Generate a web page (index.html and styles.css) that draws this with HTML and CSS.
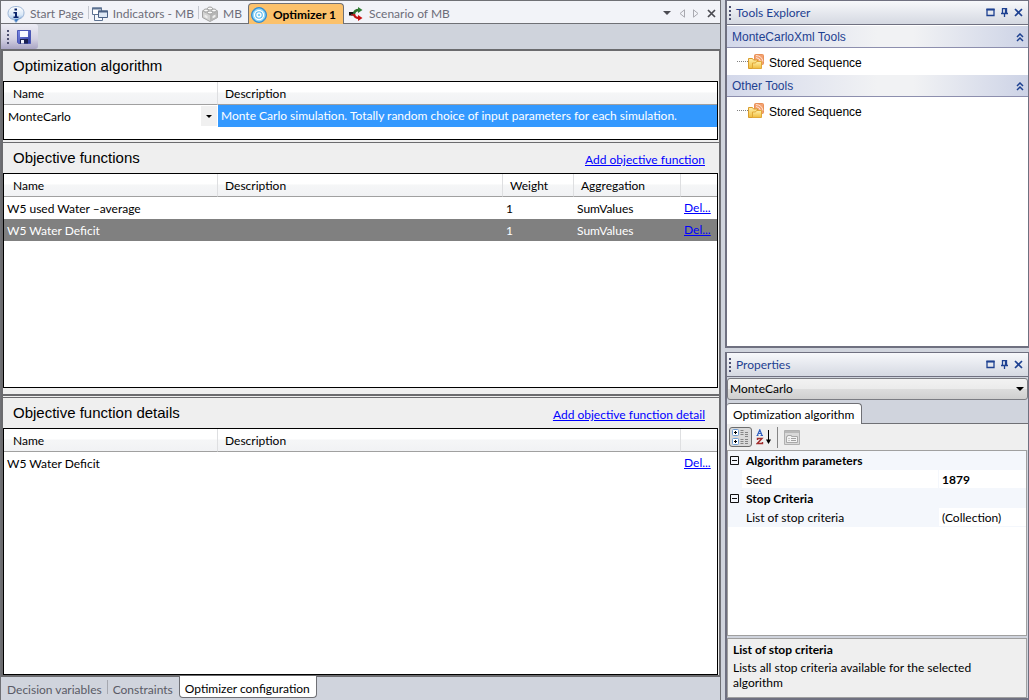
FILE: index.html
```html
<!DOCTYPE html>
<html lang="en">
<head>
<meta charset="utf-8">
<title>Optimizer 1</title>
<link rel="stylesheet" href="styles.css">
</head>
<body>
<svg class="defs" width="0" height="0" aria-hidden="true">
  <defs>
    <linearGradient id="g-info" x1="0" y1="0" x2="0" y2="1"><stop offset="0" stop-color="#ffffff"/><stop offset="0.5" stop-color="#dbe9f8"/><stop offset="1" stop-color="#7fa9da"/></linearGradient>
    <linearGradient id="g-disk" x1="0" y1="0" x2="1" y2="1"><stop offset="0" stop-color="#7f8ce8"/><stop offset="1" stop-color="#2a389c"/></linearGradient>
    <linearGradient id="g-fold" x1="0" y1="0" x2="0" y2="1"><stop offset="0" stop-color="#fff0a8"/><stop offset="1" stop-color="#f0bc3c"/></linearGradient>
    <symbol id="i-folder" viewBox="0 0 16 16">
      <rect x="6.5" y="0.5" width="9" height="10" rx="1" fill="#f3a070" stroke="#e89058"/>
      <path d="M8 3.500q4 .5 5 5M8 1.500q6 .5 7 6" fill="none" stroke="#fde3d0"/>
      <path d="M.5 4.500h4l1 1.500h4v8.500h-9z" fill="url(#g-fold)" stroke="#d99c2c"/>
      <path d="M4.500 9h3l1-1.500h5v7h-9z" fill="url(#g-fold)" stroke="#e0a838"/>
    </symbol>
    <symbol id="i-max" viewBox="0 0 9 9"><path d="M1 1.500h7v6H1z" fill="none" stroke="currentColor" stroke-width="1.300"/><path d="M.4 1.500h8.200" stroke="currentColor" stroke-width="1.800"/></symbol>
    <symbol id="i-pin" viewBox="0 0 9 9"><path d="M2.500 5V.5h4V5M1 5.500h7M4.500 6v3M5.500 1v4" fill="none" stroke="currentColor" stroke-width="1.300"/></symbol>
    <symbol id="i-close" viewBox="0 0 9 9"><path d="M1 1l7 7M8 1L1 8" stroke="currentColor" stroke-width="1.700"/></symbol>
    <symbol id="i-chev" viewBox="0 0 8 9"><path d="M1 4l3-3 3 3M1 8l3-3 3 3" fill="none" stroke="currentColor" stroke-width="1.500"/></symbol>
    <symbol id="i-down" viewBox="0 0 8 4"><path d="M0 0h8L4 4z" fill="currentColor"/></symbol>
    <symbol id="i-minus" viewBox="0 0 9 9"><path d="M.5.5h8v8h-8zM2 4.500h5" fill="none" stroke="#111"/></symbol>
  </defs>
</svg>
<div class="workspace">
  <main class="document">
    <nav class="doc-tabs" aria-label="Documents">
      <button class="doc-tab">
        <svg width="18" height="17" viewBox="0 0 18 17"><path d="M9 .5c5 0 8 2.500 8 6.500 0 3.200-2 5.300-5 6L9 16.500 6.500 13.500C3 13 1 10.500 1 7.500 1 3.500 4 .5 9 .5z" fill="url(#g-info)" stroke="#9db6d6"/><path d="M15.500 9.500c-1 2-2.500 3-4 3.500L9 16.200l-1.500-3c4 .3 6.500-1.200 8-3.700z" fill="#3c78c0"/><path d="M7.500 2.500H10v2H7.500zM6.500 6H10v4.500h1.500V12h-5v-1.500H8v-3H6.500z" fill="#0a246c"/></svg>
        <span>Start Page</span>
      </button>
      <button class="doc-tab">
        <svg width="16" height="15" viewBox="0 0 16 15"><path d="M.5 1h9v6.500h-9z" fill="#fff" stroke="#5d7292"/><path d="M0 1.500h10" stroke="#5d7292" stroke-width="2"/><path d="M2.500 7.500h8v6h-8z" fill="#f4f7fb" stroke="#5d7292"/><path d="M6.500 4h9v6.500h-9z" fill="#dfe8f4" stroke="#4c6285"/><path d="M6 4.500h10" stroke="#4c6285" stroke-width="2"/></svg>
        <span>Indicators - MB</span>
      </button>
      <button class="doc-tab">
        <svg width="16" height="16" viewBox="0 0 16 16"><path d="M.5 5L8 2l7.500 3v6.500L8 15.500.5 11.500z" fill="#d2d2d2" stroke="#a2a2a2"/><path d="M.5 5L8 8.500 15.500 5 8 2z" fill="#efefef" stroke="#b5b5b5"/><path d="M8 8.500v7l7.500-4V5z" fill="#b5b5b5"/><g fill="#fafafa" stroke="#a0a0a0"><ellipse cx="8" cy="2.500" rx="2.500" ry="1.500"/><ellipse cx="4" cy="4.500" rx="2.300" ry="1.500"/><ellipse cx="12" cy="4.500" rx="2.300" ry="1.500"/><ellipse cx="8" cy="6.500" rx="2.500" ry="1.500"/></g><path d="M2.500 8.500l3 1.500v2.500L2.500 11zM10.500 10l3-1.500V11l-3 1.500z" fill="#eee"/></svg>
        <span>MB</span>
      </button>
      <button class="doc-tab doc-tab-active">
        <svg width="16" height="16" viewBox="0 0 16 16"><circle cx="8" cy="8" r="7.500" fill="#3a9ce0" stroke="#3a8ccc"/><circle cx="8" cy="8" r="6" fill="#58c0f0" stroke="#a8e4fb"/><circle cx="8" cy="8" r="4.500" fill="#58b8ec" stroke="#fff" stroke-width="1.400"/><circle cx="8" cy="8" r="2" fill="#7fd0f5" stroke="#fff" stroke-width="1.400"/></svg>
        <span>Optimizer 1</span>
      </button>
      <button class="doc-tab">
        <svg width="15" height="14" viewBox="0 0 15 14"><path d="M1 5h5v3.500H1z" fill="#111"/><path d="M3 7h4v1.500H3z" fill="#8a1f1f"/><path d="M6 7c.3-3 2-4 5-4" fill="none" stroke="#2f6e2f" stroke-width="2.400"/><path d="M10 0l4.500 3L10 6z" fill="#2f7d32"/><path d="M6 7c.3 3 2 4 5 4" fill="none" stroke="#c01414" stroke-width="2.400"/><path d="M10 8l4.500 3-4.500 3z" fill="#c81010"/></svg>
        <span>Scenario of MB</span>
      </button>
      <span class="doc-tools">
        <button class="icon-btn" aria-label="Tab list"><svg width="8" height="4"><use href="#i-down"/></svg></button>
        <button class="icon-btn dim" aria-label="Scroll left"><svg width="6" height="9" viewBox="0 0 6 9"><path d="M5.500 .8v7.400L1 4.500z" fill="none" stroke="currentColor"/></svg></button>
        <button class="icon-btn dim" aria-label="Scroll right"><svg width="6" height="9" viewBox="0 0 6 9"><path d="M.5 .8v7.400L5 4.500z" fill="none" stroke="currentColor"/></svg></button>
        <button class="icon-btn" aria-label="Close"><svg width="9" height="9"><use href="#i-close"/></svg></button>
      </span>
    </nav>
    <div class="toolbar">
      <div class="tool-group">
        <svg width="2" height="14" viewBox="0 0 2 14"><path d="M1 0v14" stroke="#4d5070" stroke-width="2" stroke-dasharray="2 2"/></svg>
        <button class="icon-btn" aria-label="Save">
          <svg width="14" height="14" viewBox="0 0 14 14"><path d="M.5.500h13v13H1.500l-1-1z" fill="url(#g-disk)" stroke="#4a56b4"/><path d="M3 1h8v6H3z" fill="#f6f8ff"/><path d="M3 9h8v4.500H3z" fill="#1b2050"/><path d="M4 10h3v3.500H4z" fill="#f0f2fa"/></svg>
        </button>
      </div>
    </div>
    <div class="editor">
      <section class="pane">
        <header class="pane-head"><h2>Optimization algorithm</h2></header>
        <div class="list list-short">
          <table>
            <colgroup><col class="c-name"><col></colgroup>
            <thead><tr><th>Name</th><th>Description</th></tr></thead>
            <tbody><tr>
              <td class="combo-cell"><select class="combo" aria-label="Algorithm"><option>MonteCarlo</option></select><span class="combo-arrow"><svg width="6" height="3" viewBox="0 0 8 4" preserveAspectRatio="none"><path d="M0 0h8L4 4z"/></svg></span></td>
              <td class="picked">Monte Carlo simulation. Totally random choice of input parameters for each simulation.</td>
            </tr></tbody>
          </table>
        </div>
      </section>
      <section class="pane pane-functions">
        <header class="pane-head"><h2>Objective functions</h2><a href="#">Add objective function</a></header>
        <div class="list">
          <table>
            <colgroup><col class="c-name"><col><col class="c-weight"><col class="c-agg"><col class="c-del"></colgroup>
            <thead><tr><th>Name</th><th>Description</th><th>Weight</th><th>Aggregation</th><th></th></tr></thead>
            <tbody>
              <tr><td>W5 used Water –average</td><td></td><td>1</td><td>SumValues</td><td><a href="#">Del...</a></td></tr>
              <tr class="selected"><td>W5 Water Deficit</td><td></td><td>1</td><td>SumValues</td><td><a href="#">Del...</a></td></tr>
            </tbody>
          </table>
        </div>
      </section>
      <div class="splitter"></div>
      <section class="pane pane-details">
        <header class="pane-head"><h2>Objective function details</h2><a href="#">Add objective function detail</a></header>
        <div class="list">
          <table>
            <colgroup><col class="c-name"><col><col class="c-del"></colgroup>
            <thead><tr><th>Name</th><th>Description</th><th></th></tr></thead>
            <tbody><tr><td>W5 Water Deficit</td><td></td><td><a href="#">Del...</a></td></tr></tbody>
          </table>
        </div>
      </section>
    </div>
    <nav class="page-tabs" aria-label="Pages">
      <button class="page-tab">Decision variables</button>
      <button class="page-tab">Constraints</button>
      <button class="page-tab page-tab-active">Optimizer configuration</button>
    </nav>
  </main>
  <aside class="side">
    <section class="dock">
      <header class="dock-head">
        <svg width="2" height="14" viewBox="0 0 2 14"><path d="M1 0v14" stroke="#4d5070" stroke-width="2" stroke-dasharray="2 2"/></svg>
        <h2>Tools Explorer</h2>
        <button class="icon-btn" aria-label="Maximize"><svg width="9" height="9"><use href="#i-max"/></svg></button>
        <button class="icon-btn" aria-label="Pin"><svg width="9" height="9"><use href="#i-pin"/></svg></button>
        <button class="icon-btn" aria-label="Close"><svg width="9" height="9"><use href="#i-close"/></svg></button>
      </header>
      <div class="dock-body">
        <button class="group-head"><span>MonteCarloXml Tools</span><svg width="8" height="9"><use href="#i-chev"/></svg></button>
        <div class="tool-item"><i class="branch"></i><svg width="16" height="16"><use href="#i-folder"/></svg><span>Stored Sequence</span></div>
        <button class="group-head"><span>Other Tools</span><svg width="8" height="9"><use href="#i-chev"/></svg></button>
        <div class="tool-item"><i class="branch"></i><svg width="16" height="16"><use href="#i-folder"/></svg><span>Stored Sequence</span></div>
      </div>
    </section>
    <section class="dock">
      <header class="dock-head">
        <svg width="2" height="14" viewBox="0 0 2 14"><path d="M1 0v14" stroke="#4d5070" stroke-width="2" stroke-dasharray="2 2"/></svg>
        <h2>Properties</h2>
        <button class="icon-btn" aria-label="Maximize"><svg width="9" height="9"><use href="#i-max"/></svg></button>
        <button class="icon-btn" aria-label="Pin"><svg width="9" height="9"><use href="#i-pin"/></svg></button>
        <button class="icon-btn" aria-label="Close"><svg width="9" height="9"><use href="#i-close"/></svg></button>
      </header>
      <div class="object-picker">
        <select aria-label="Object"><option>MonteCarlo</option></select>
        <svg width="8" height="4"><use href="#i-down"/></svg>
      </div>
      <div class="prop-tabs"><button class="prop-tab">Optimization algorithm</button></div>
      <div class="prop-tools">
        <button class="icon-btn pressed" aria-label="Categorized">
          <svg width="18" height="16" viewBox="0 0 18 16"><g fill="#fff" stroke="#6e9bd0"><rect x=".5" y=".5" width="6" height="6" rx="1"/><rect x=".5" y="9.500" width="6" height="6" rx="1"/></g><path d="M2 3.500h3M3.500 2v3M2 12.500h3M3.500 11v3" stroke="#000"/><path d="M8.500 1.500h3M8.500 3.500h3M8.500 5.500h3M8.500 10.500h3M8.500 12.500h3M8.500 14.500h3M13 3.500h3M13 5.500h3M13 7.500h3M13 10.500h3M13 12.500h3M13 14.500h3" stroke="#858585"/></svg>
        </button>
        <button class="icon-btn" aria-label="Alphabetical">
          <svg width="16" height="16" viewBox="0 0 16 16"><path d="M.5 6.500h2M4.500 6.500h2.500M1.500 6L3.800.8 5.900 6M2.500 4.500H5" fill="none" stroke="#2f5fc0" stroke-width="1.200"/><path d="M1.500 11V9.500H6L1.300 14.500H6.500V13" fill="none" stroke="#a02c2c" stroke-width="1.400"/><path d="M12.500 1v12" stroke="#000"/><path d="M10 10.500h5L12.500 15z"/></svg>
        </button>
        <i class="sep"></i>
        <button class="icon-btn" aria-label="Property pages" disabled>
          <svg width="16" height="15" viewBox="0 0 16 15"><path d="M.5.500h15v14H.5z" fill="#d9d9d9" stroke="#b0b0b0"/><path d="M1 2h14" stroke="#b8b8b8" stroke-width="2"/><path d="M2.500 6.500v6h11v-6h-6v-1h-4v1z" fill="#f3f3f3" stroke="#a8a8a8"/><path d="M4.500 8.500h1M7 8.500h5M4.500 10.500h1M7 10.500h5" stroke="#a0a0a0"/></svg>
        </button>
      </div>
      <div class="prop-grid">
        <table>
          <colgroup><col class="p-gutter"><col><col class="p-value"></colgroup>
          <tbody>
            <tr class="category"><td><button class="icon-btn" aria-label="Collapse Algorithm parameters"><svg width="9" height="9"><use href="#i-minus"/></svg></button></td><th colspan="2">Algorithm parameters</th></tr>
            <tr><td></td><td>Seed</td><td class="value"><b>1879</b></td></tr>
            <tr class="category"><td><button class="icon-btn" aria-label="Collapse Stop Criteria"><svg width="9" height="9"><use href="#i-minus"/></svg></button></td><th colspan="2">Stop Criteria</th></tr>
            <tr class="current"><td></td><td>List of stop criteria</td><td class="value">(Collection)</td></tr>
          </tbody>
        </table>
      </div>
      <div class="prop-help">
        <h3>List of stop criteria</h3>
        <p>Lists all stop criteria available for the selected algorithm</p>
      </div>
    </section>
  </aside>
</div>
</body>
</html>
```
FILE: styles.css
```css
* { box-sizing: border-box; }

body {
  margin: 0;
  color: #000;
  background: #d0d4dd;
  font: 12px/16px Lato, "Open Sans", sans-serif;
}

h2, h3, p { margin: 0; font-weight: 400; font-size: inherit; }
button, select { font: inherit; color: inherit; }
button { border: 0; padding: 0; background: none; }
svg { display: block; flex: none; }
table { width: 100%; border-collapse: separate; border-spacing: 0; table-layout: fixed; }
a { color: #0000ff; }
.defs { position: absolute; }
.icon-btn { display: flex; align-items: center; justify-content: center; flex: none; }

.workspace {
  display: grid;
  grid-template-columns: minmax(0, 1fr) 304px;
  gap: 4px;
  height: 100vh;
}

/* document area */
.document {
  display: flex;
  flex-direction: column;
  min-height: 0;
  border: solid #6f7075;
  border-width: 1px 1px 0 1px;
}

.doc-tabs {
  display: flex;
  align-items: flex-end;
  height: 23px;
  padding-left: 6px;
  color: #6d6d78;
  background: #f2f3f8;
  border-bottom: 1px solid #6f7075;
}
.doc-tab {
  display: flex;
  align-items: center;
  gap: 5px;
  height: 22px;
  padding: 4px 4px 0 4px;
  white-space: nowrap;
}
.doc-tab:first-child { padding-left: 0; }
.doc-tab + .doc-tab:not(.doc-tab-active) {
  background: linear-gradient(#c5c8d0, #c5c8d0) 0 5px / 1px 13px no-repeat;
}
.doc-tab-active {
  gap: 6px;
  height: 21px;
  margin: 0 0 -1px 2px;
  padding: 2px 7px 0 2px;
  color: #000;
  font-weight: 700;
  background: #fbc16b;
  border: 1px solid #6f7075;
  border-bottom: 0;
  border-radius: 4px 4px 0 0;
}
.doc-tab-active + .doc-tab:not(.doc-tab-active) { background: none; gap: 6px; }
.doc-tools {
  display: flex;
  align-items: center;
  gap: 8px;
  height: 20px;
  margin-left: auto;
  padding: 0 4px 0 0;
  color: #4b4b52;
}
.dim { color: #a9a9b0; }

.toolbar { height: 25px; background: #cfd3dc; }
.tool-group {
  display: flex;
  align-items: center;
  gap: 8px;
  width: 37px;
  height: 25px;
  padding-left: 6px;
  background: linear-gradient(#ececf4, #d3d1e2 60%, #a9a5c4);
  border-radius: 0 3px 3px 0;
}

.editor {
  display: flex;
  flex: 1;
  flex-direction: column;
  min-height: 0;
  border: 2px solid #6b6b6e;
  border-right-width: 1px;
  background: #efefef;
}
.pane { display: flex; flex-direction: column; min-height: 0; }
.pane-functions { flex: 246 1 0; border-top: 1px solid #6b6b6e; }
.pane-details { flex: 278 1 0; border-top: 1px solid #6b6b6e; }
.pane-head {
  display: flex;
  align-items: center;
  justify-content: space-between;
  flex: none;
  height: 30px;
  padding: 0 14px 0 10px;
}
.pane-head h2 { font: 15px/20px "Liberation Sans", Arial, sans-serif; }
.pane-head a { padding-top: 4px; }

.list {
  flex: 1;
  min-height: 0;
  overflow: hidden;
  margin-right: 1px;
  background: #fff;
  border: 1px solid #000;
}
.list-short { flex: none; height: 59px; margin-bottom: 2px; }
.c-name { width: 214px; }
.c-weight { width: 71px; }
.c-agg { width: 107px; }
.c-del { width: 36px; }
.list th {
  height: 23px;
  padding: 1px 7px 0;
  text-align: left;
  font-weight: 400;
  background: linear-gradient(#fff 45%, #f5f6f7 50%, #f1f2f4);
  border-right: 1px solid #dedfe1;
  border-bottom: 1px solid #a0a0a0;
}
.list th:first-child { padding-left: 9px; }
.list th:last-child { border-right: 0; }
.list td { height: 22px; padding: 2px 3px 0; white-space: nowrap; }
.list td a { display: block; margin-top: -2px; }
.selected { color: #fff; background: #808080; }
.list .picked { padding-top: 0; color: #fff; background: #3399ff; }
.list .combo-cell { position: relative; padding: 0; }
.combo {
  display: block;
  width: 100%;
  height: 22px;
  padding: 1px 0 0 4px;
  appearance: none;
  border: 0;
  background: #fff;
}
.combo-arrow {
  position: absolute;
  inset: 1px 1px 1px auto;
  display: flex;
  align-items: center;
  justify-content: center;
  width: 16px;
  background: #f0f0f0;
  pointer-events: none;
}

.splitter { flex: none; height: 8px; border-bottom: 2px solid #6b6b6e; margin: 0 0 1px; }

.page-tabs {
  display: flex;
  flex: none;
  height: 23px;
  color: #5a5b66;
}
.page-tab { height: 21px; padding: 4px 6px 0 6px; white-space: nowrap; }
.page-tab + .page-tab:not(.page-tab-active) {
  margin-left: -1px;
  background: linear-gradient(#a5a7af, #a5a7af) 0 3px / 1px 14px no-repeat;
}
.page-tab-active {
  height: 22px;
  margin-top: -1px;
  padding: 4px 6px 0 5px;
  color: #000;
  background: #fff;
  border: 1px solid #6f7075;
  border-top: 0;
  border-radius: 0 0 4px 4px;
}

/* docked side panels */
.side {
  display: flex;
  flex-direction: column;
  gap: 4px;
  min-height: 0;
}
.dock {
  display: flex;
  flex: 1 1 0;
  flex-direction: column;
  min-height: 0;
  border: 1px solid #6f7080;
  border-left-width: 2px;
  border-bottom-width: 2px;
}
.dock-head {
  display: flex;
  align-items: center;
  gap: 5px;
  flex: none;
  height: 24px;
  padding: 0 5px 0 2px;
  color: #1e4191;
  background: linear-gradient(#f7f8fb, #d5d9e2);
  border-bottom: 1px solid #6f7080;
}
.dock-head h2 { flex: 1; }
.dock-body { flex: 1; min-height: 0; padding-top: 1px; background: #fff; }
.group-head {
  display: flex;
  align-items: center;
  justify-content: space-between;
  width: 100%;
  height: 22px;
  padding: 1px 4px 0 5px;
  color: #1e4191;
  font: 12px/16px "Liberation Sans", Arial, sans-serif;
  background: linear-gradient(90deg, #d3d8ea, #f1f2f4 50%, #f1f2f4 62%, #cdd3e6);
  border-bottom: 1px solid #8d8fae;
}
.tool-item {
  display: flex;
  align-items: center;
  height: 27px;
  padding-left: 10px;
  font: 12px/16px "Liberation Sans", Arial, sans-serif;
}
.tool-item span { padding: 2px 0 0 5px; }
.branch { width: 11px; border-top: 1px dotted #808080; }

.object-picker { position: relative; flex: none; height: 24px; padding: 1px 0 1px; }
.object-picker select {
  display: block;
  width: 100%;
  height: 22px;
  padding: 0 2px;
  appearance: none;
  border: 1px solid #7b7c82;
  border-radius: 3px;
  background: linear-gradient(#f2f2f2, #ebebeb 49%, #dddddd 50%, #cfcfcf);
}
.object-picker svg { position: absolute; top: 10px; right: 4px; pointer-events: none; }

.prop-tabs {
  display: flex;
  align-items: flex-end;
  flex: none;
  height: 23px;
  border-bottom: 1px solid #6f7075;
}
.prop-tab {
  height: 21px;
  margin-bottom: -1px;
  padding: 2px 7px 0 6px;
  white-space: nowrap;
  background: #fff;
  border: solid #6f7075;
  border-width: 1px 1px 0 0;
  border-radius: 3px 4px 0 0;
}
.prop-tools {
  display: flex;
  align-items: center;
  gap: 4px;
  flex: none;
  height: 26px;
  padding: 0 2px;
  background: #efefef;
}
.pressed {
  width: 23px;
  height: 20px;
  border: 1px solid #6c6c6c;
  border-radius: 3px;
  background: #d9d9d9;
}
.sep { width: 1px; height: 21px; margin: 0 2px 0 1px; background: #858585; }

.prop-grid {
  flex: 1;
  min-height: 0;
  overflow: hidden;
  margin-right: 1px;
  background: #fff;
  border: 1px solid #a0a0a0;
}
.p-gutter { width: 14px; }
.p-value { width: 88px; }
.prop-grid td, .prop-grid th {
  height: 19px;
  padding: 1px 4px 0;
  text-align: left;
  border-bottom: 1px solid #f4f7fc;
}
.prop-grid th { font-weight: 700; }
.prop-grid td:first-child { padding: 0 2px; background: #f4f7fc; }
.category { background: #f4f7fc; }
.current { background: #f4f7fc; }
.prop-grid .value { padding-left: 3px; background: #fff; border-left: 1px solid #f4f7fc; }
.prop-help {
  flex: none;
  height: 60px;
  margin: 2px 1px 0 0;
  padding: 3px 5px;
  line-height: 15px;
  background: #efefef;
  border: 1px solid #a0a0a0;
}
.prop-help h3 { margin-bottom: 3px; font-weight: 700; }
```
